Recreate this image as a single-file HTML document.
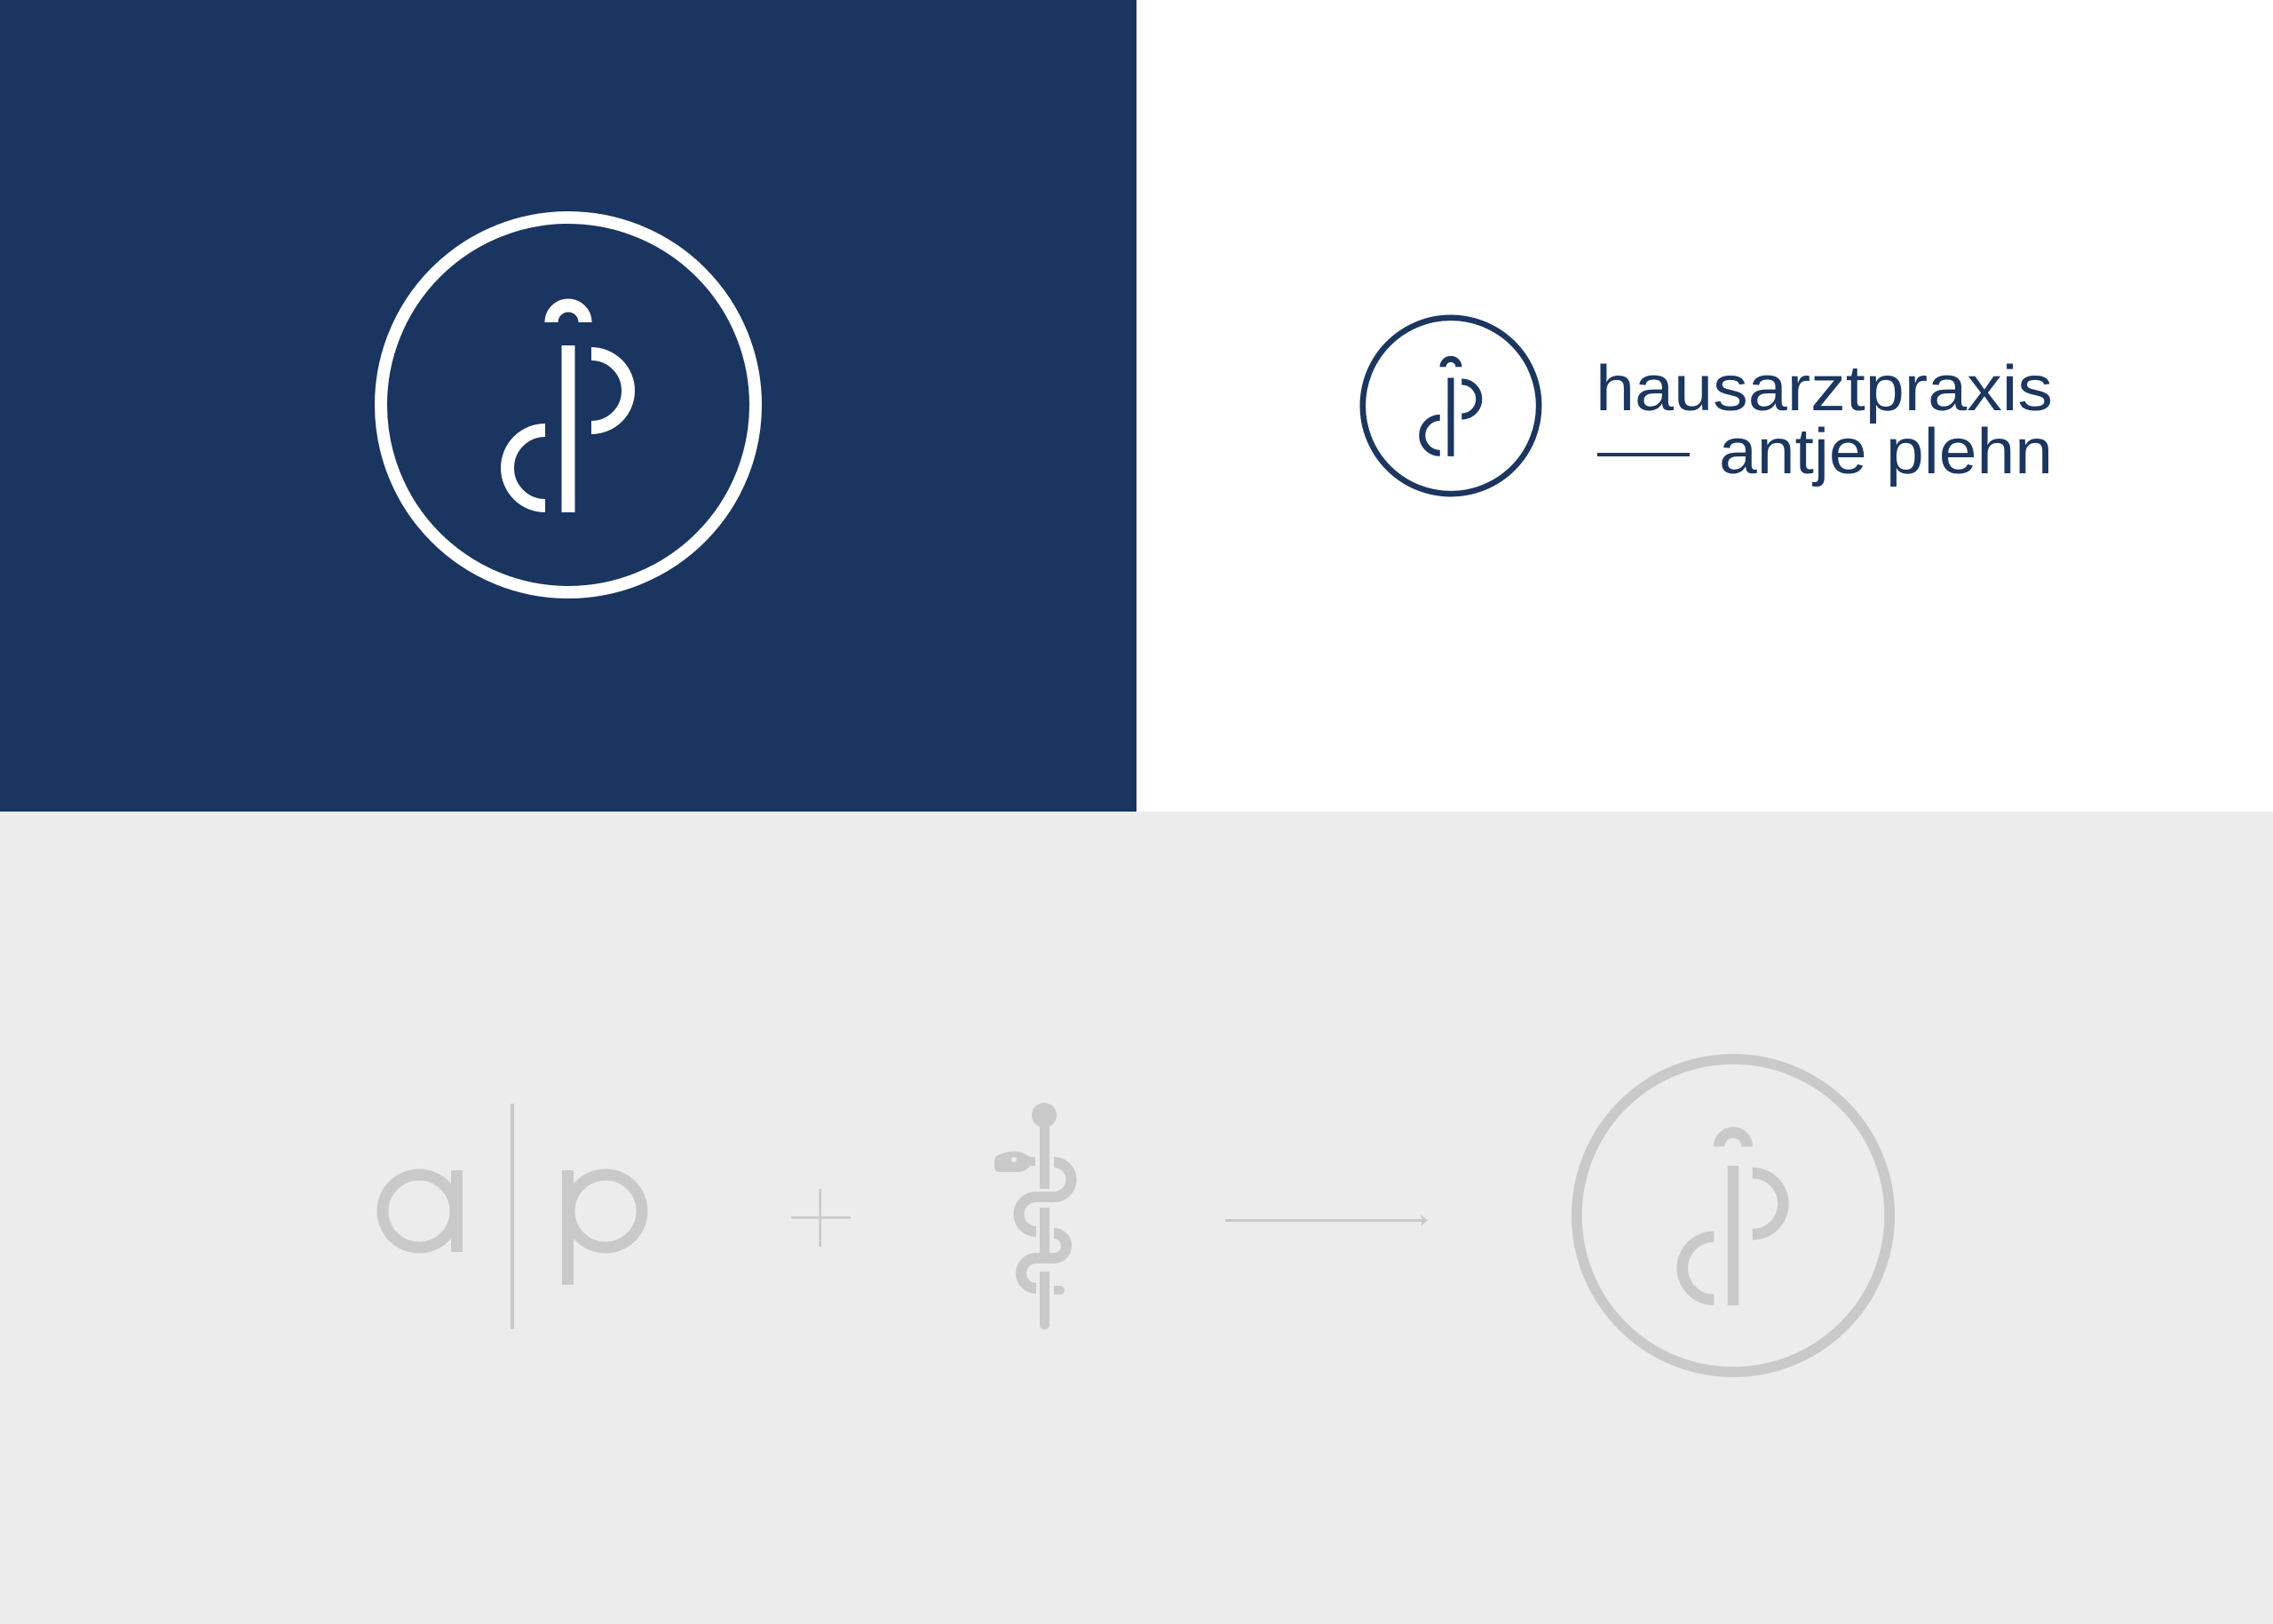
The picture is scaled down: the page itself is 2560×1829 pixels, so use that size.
<!DOCTYPE html>
<html><head><meta charset="utf-8"><style>html,body{margin:0;padding:0;background:#ececec}svg{display:block}</style></head>
<body>
<svg width="2560" height="1829" viewBox="0 0 2560 1829" xmlns="http://www.w3.org/2000/svg">
<defs>
<g id="mark">
  <circle cx="0" cy="0" r="211" stroke-width="14" fill="none" stroke="currentColor"/>
  <rect x="-7.5" y="-67" width="15" height="188" fill="currentColor" stroke="none"/>
  <path d="M-19,-93 A19,19 0 0 1 19,-93" stroke-width="15" fill="none" stroke="currentColor"/>
  <path d="M26,-57.5 A41.5,41.5 0 0 1 26,25.5" stroke-width="15" fill="none" stroke="currentColor"/>
  <path d="M-26,28.5 A42.5,42.5 0 0 0 -26,113.5" stroke-width="15" fill="none" stroke="currentColor"/>
</g>
</defs>
<rect x="0" y="0" width="2560" height="914" fill="#fff"/>
<rect x="0" y="0" width="1280" height="914" fill="#1a355f"/>
<rect x="0" y="914" width="2560" height="915" fill="#ececec"/>

<g transform="translate(640,456)" color="#fff"><use href="#mark"/></g>
<g transform="translate(1634,457) scale(0.47)" color="#1b365f"><use href="#mark"/></g>
<g transform="translate(1952,1369) scale(0.835)" color="#c9c9c9"><use href="#mark"/></g>

<text x="1797" y="462" font-family="Liberation Sans, sans-serif" font-size="72" fill="#1b365f" textLength="515" lengthAdjust="spacingAndGlyphs">hausarztpraxis</text>
<text x="1936" y="533" font-family="Liberation Sans, sans-serif" font-size="72" fill="#1b365f" textLength="376" lengthAdjust="spacingAndGlyphs">antje plehn</text>
<rect x="1799" y="510" width="104" height="4" fill="#1b365f"/>

<g fill="none" stroke="#c9c9c9">
  <circle cx="472" cy="1364" r="41" stroke-width="13"/>
  <circle cx="682" cy="1364" r="41" stroke-width="13"/>
</g>
<g fill="#c9c9c9">
  <rect x="508" y="1318" width="13" height="92"/>
  <rect x="633" y="1318" width="13" height="129"/>
  <rect x="575" y="1243" width="4" height="254"/>
  <rect x="891" y="1370" width="67" height="2.5"/>
  <rect x="922.5" y="1339" width="2.5" height="65"/>
  <rect x="1380" y="1373" width="226" height="3"/>
  <path d="M1600,1368 L1608,1374.5 L1600,1381 L1602,1374.5 Z"/>
  <circle cx="1176" cy="1256" r="14"/>
  <rect x="1171" y="1256" width="11" height="83"/>
  <rect x="1171" y="1360" width="11" height="53"/>
  <path d="M1171,1432 H1182 V1492 A5.5,5.5 0 0 1 1171,1492 Z"/>
  <path d="M1124,1301 Q1138,1295 1148,1297 Q1156,1300 1160,1303 H1166 V1313 H1160 Q1156,1319 1148,1320 H1126 Q1120,1320 1120,1314 V1308 Q1120,1303 1124,1301 Z"/>
  <path d="M1187,1448 H1194 A5,5 0 0 1 1194,1458 H1187 Z"/>
</g>
<circle cx="1142" cy="1306" r="3" fill="#ececec"/>
<g fill="none" stroke="#c9c9c9" stroke-width="12">
  <path d="M1187,1309 A19.5,19.5 0 0 1 1187,1348 H1167 A19.5,19.5 0 0 0 1167,1387"/>
  <path d="M1187,1389 A14,14 0 0 1 1187,1417 H1167 A17,17 0 0 0 1167,1451"/>
</g>
</svg>
</body></html>
